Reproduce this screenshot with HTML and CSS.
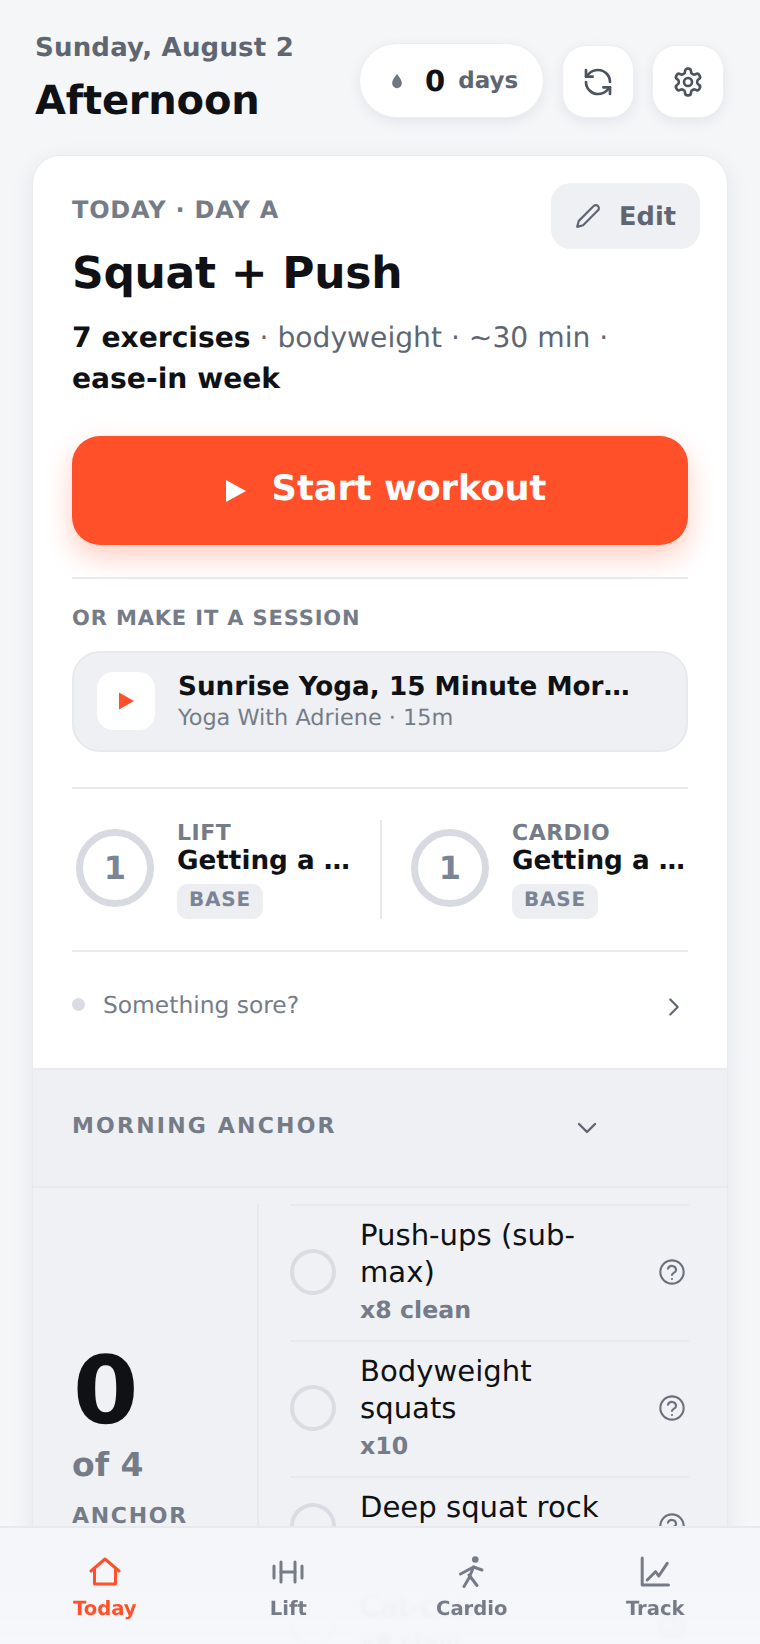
FILE: index.html
```html
<!DOCTYPE html>
<html lang="en">
<head>
<meta charset="utf-8">
<title>Today</title>
<link rel="stylesheet" href="styles.css">
</head>
<body>
<div class="app">
  <header class="top">
    <div class="top-text">
      <div class="date">Sunday, August 2</div>
      <h1 class="greeting">Afternoon</h1>
    </div>
    <div class="top-actions">
      <div class="streak">
        <svg class="drop" viewBox="0 0 24 24"><path d="M12 2.5c3.5 5 6.500 8 6.500 12.500a6.500 6.500 0 0 1-13 0C5.500 10.500 8.500 7.500 12 2.500z"/></svg>
        <span class="streak-num">0</span>
        <span class="streak-unit">days</span>
      </div>
      <button class="icon-btn">
        <svg class="ico ico-32" viewBox="0 0 24 24"><path d="M21 12a9 9 0 0 0-9-9 9.750 9.750 0 0 0-6.740 2.740L3 8"/><path d="M3 3v5h5"/><path d="M3 12a9 9 0 0 0 9 9 9.750 9.750 0 0 0 6.740-2.740L21 16"/><path d="M16 16h5v5"/></svg>
      </button>
      <button class="icon-btn">
        <svg class="ico ico-32" viewBox="0 0 24 24"><path d="M12.220 2h-.44a2 2 0 0 0-2 2v.18a2 2 0 0 1-1 1.730l-.43.25a2 2 0 0 1-2 0l-.15-.08a2 2 0 0 0-2.730.73l-.22.38a2 2 0 0 0 .73 2.730l.15.1a2 2 0 0 1 1 1.720v.51a2 2 0 0 1-1 1.740l-.15.09a2 2 0 0 0-.73 2.730l.22.38a2 2 0 0 0 2.730.73l.15-.08a2 2 0 0 1 2 0l.43.25a2 2 0 0 1 1 1.730V20a2 2 0 0 0 2 2h.44a2 2 0 0 0 2-2v-.18a2 2 0 0 1 1-1.730l.43-.25a2 2 0 0 1 2 0l.15.08a2 2 0 0 0 2.730-.73l.22-.39a2 2 0 0 0-.73-2.730l-.15-.08a2 2 0 0 1-1-1.740v-.5a2 2 0 0 1 1-1.740l.15-.09a2 2 0 0 0 .73-2.730l-.22-.38a2 2 0 0 0-2.730-.73l-.15.08a2 2 0 0 1-2 0l-.43-.25a2 2 0 0 1-1-1.730V4a2 2 0 0 0-2-2z"/><circle cx="12" cy="12" r="3"/></svg>
      </button>
    </div>
  </header>

  <main class="card">
    <section class="card-main">
      <button class="edit">
        <svg class="ico ico-26" viewBox="0 0 24 24"><path d="M17 3a2.850 2.830 0 1 1 4 4L7.500 20.500 2 22l1.500-5.500Z"/></svg>
        <span>Edit</span>
      </button>
      <div class="eyebrow">TODAY · DAY A</div>
      <h2 class="workout">Squat + Push</h2>
      <p class="meta"><b>7 exercises</b> · bodyweight · ~30 min · <b>ease-in week</b></p>
      <button class="start">
        <svg class="start-play" viewBox="0 0 20 22"><path d="M0 0l20 11L0 22z"/></svg>
        <span class="start-text">Start workout</span>
      </button>
      <div class="session-block">
        <div class="label">OR MAKE IT A SESSION</div>
        <div class="session">
          <div class="thumb"><svg class="thumb-play" viewBox="0 0 16 18"><path d="M0 0l16 9L0 18z"/></svg></div>
          <div class="session-text">
            <div class="session-title">Sunrise Yoga, 15 Minute Morning Stretch</div>
            <div class="session-sub">Yoga With Adriene · 15m</div>
          </div>
        </div>
      </div>
      <div class="programs">
        <div class="program">
          <div class="ring">1</div>
          <div class="program-text">
            <div class="program-kind">LIFT</div>
            <div class="program-name">Getting a base</div>
            <span class="tag">BASE</span>
          </div>
        </div>
        <div class="program">
          <div class="ring">1</div>
          <div class="program-text">
            <div class="program-kind">CARDIO</div>
            <div class="program-name">Getting a base</div>
            <span class="tag">BASE</span>
          </div>
        </div>
      </div>
      <div class="sore">
        <span class="dot"></span>
        <span class="sore-text">Something sore?</span>
        <svg class="ico ico-chev" viewBox="0 0 24 24"><path d="m9 18 6-6-6-6"/></svg>
      </div>
    </section>

    <section class="anchor-head">
      <span class="anchor-title">MORNING ANCHOR</span>
      <svg class="ico ico-chev-d" viewBox="0 0 24 24"><path d="m6 9 6 6 6-6"/></svg>
    </section>

    <section class="anchor-body">
      <div class="tally">
        <div class="tally-num">0</div>
        <div class="tally-of">of 4</div>
        <div class="tally-label">ANCHOR</div>
      </div>
      <div class="rows">
        <div class="row">
          <span class="check"></span>
          <div class="row-text"><div class="row-name">Push-ups (sub-max)</div><div class="row-sub">x8 clean</div></div>
          <svg class="ico ico-help" viewBox="0 0 24 24"><circle cx="12" cy="12" r="10"/><path d="M8.500 9.200a3.600 3.600 0 0 1 7 1c0 2.400-3.500 2.700-3.500 4.300"/><path d="M12 18h.01"/></svg>
        </div>
        <div class="row">
          <span class="check"></span>
          <div class="row-text"><div class="row-name">Bodyweight squats</div><div class="row-sub">x10</div></div>
          <svg class="ico ico-help" viewBox="0 0 24 24"><circle cx="12" cy="12" r="10"/><path d="M8.500 9.200a3.600 3.600 0 0 1 7 1c0 2.400-3.500 2.700-3.500 4.300"/><path d="M12 18h.01"/></svg>
        </div>
        <div class="row">
          <span class="check"></span>
          <div class="row-text"><div class="row-name">Deep squat rock</div><div class="row-sub">x5</div></div>
          <svg class="ico ico-help" viewBox="0 0 24 24"><circle cx="12" cy="12" r="10"/><path d="M8.500 9.200a3.600 3.600 0 0 1 7 1c0 2.400-3.500 2.700-3.500 4.300"/><path d="M12 18h.01"/></svg>
        </div>
        <div class="row">
          <span class="check"></span>
          <div class="row-text"><div class="row-name">Cat-cow</div><div class="row-sub">x8 slow</div></div>
          <svg class="ico ico-help" viewBox="0 0 24 24"><circle cx="12" cy="12" r="10"/><path d="M8.500 9.200a3.600 3.600 0 0 1 7 1c0 2.400-3.500 2.700-3.500 4.300"/><path d="M12 18h.01"/></svg>
        </div>
      </div>
    </section>
  </main>
</div>

<nav class="tabbar">
  <a class="tab tab-active">
    <svg class="ico ico-tab" viewBox="0 0 32 32"><path d="M2 15 16 3l14 12"/><path d="M5.500 13v15h21V13"/></svg>
    <span>Today</span>
  </a>
  <a class="tab">
    <svg class="ico ico-tab" viewBox="0 0 32 32"><path d="M2 10v12"/><path d="M9 6v20"/><path d="M23 6v20"/><path d="M30 10v12"/><path d="M9 16h14"/></svg>
    <span>Lift</span>
  </a>
  <a class="tab">
    <svg class="ico ico-tab" viewBox="0 0 32 32"><circle class="fill" cx="19.300" cy="3.500" r="3.300"/><path d="M4.500 18l13-7 8.500 3"/><path d="M17.500 11 13 22l-5 8.500"/><path d="M13 19l8 10.500"/></svg>
    <span>Cardio</span>
  </a>
  <a class="tab">
    <svg class="ico ico-tab" viewBox="0 0 32 32"><path d="M3.200 2v27h26.300"/><path d="M8.200 24l8.300-8.300 3.300 4.300 8.400-12.700"/></svg>
    <span>Track</span>
  </a>
</nav>
</body>
</html>
```
FILE: styles.css
```css
* { box-sizing: border-box; }
html, body { margin: 0; height: 100%; }
body {
  background: #f4f6f8;
  color: #0f1115;
  font-family: "DejaVu Sans", sans-serif;
  text-rendering: geometricPrecision;
  overflow: hidden;
}
button { font-family: inherit; border: 0; padding: 0; text-rendering: geometricPrecision; }
h1, h2, p { margin: 0; }

.app { padding: 30px 32px 0 32px; }

.top {
  display: flex;
  justify-content: space-between;
  align-items: flex-start;
  padding: 0 4px 0 4px;
  height: 125px;
}
.date { font-size: 26px; font-weight: 700; line-height: 34px; color: #5f6672; letter-spacing: .2px; margin: 1px 0 0 -1px; }
.greeting { font-size: 40px; font-weight: 700; line-height: 50px; margin: 11px 0 0 -1px; letter-spacing: -.2px; }

.top-actions { display: flex; align-items: flex-end; gap: 18px; margin-top: 13px; }
.streak {
  width: 185px; height: 75px;
  display: flex; align-items: center;
  padding-left: 28px;
  background: #fff;
  border-radius: 38px;
  border: 1px solid #eceef2;
  box-shadow: 0 4px 14px rgba(16,24,40,.07);
}
.drop { width: 18px; height: 18px; fill: #6f7782; margin-right: 19px; }
.streak-num { font-size: 29px; font-weight: 700; margin-right: 13px; }
.streak-unit { font-size: 23px; font-weight: 700; color: #5f6672; }
.icon-btn {
  width: 72px; height: 73px;
  display: flex; align-items: center; justify-content: center;
  background: #fff;
  border-radius: 24px;
  border: 1px solid #eceef2;
  box-shadow: 0 4px 14px rgba(16,24,40,.07);
}
.ico { fill: none; stroke: currentColor; stroke-width: 2; stroke-linecap: round; stroke-linejoin: round; display: block; }
.ico-32 { width: 32px; height: 32px; color: #4b5260; }
.ico-26 { width: 26px; height: 26px; color: #5f6672; }

.card {
  position: relative;
  height: 1700px;
  background: #fff;
  border: 1px solid #e8eaee;
  border-radius: 28px;
  box-shadow: 0 6px 24px rgba(16,24,40,.07);
  overflow: hidden;
}
.card-main { position: relative; padding: 37px 39px 0 39px; height: 912px; }
.edit {
  position: absolute; top: 27px; right: 27px;
  width: 149px; height: 66px;
  display: flex; align-items: center; justify-content: center; gap: 18px;
  background: #eef0f3;
  border-radius: 20px;
  color: #5f6672;
  font-size: 25.6px; font-weight: 700;
}
.edit span { margin-top: 1px; }
.eyebrow { font-size: 24px; font-weight: 700; letter-spacing: .8px; color: #757c88; line-height: 34px; }
.workout { font-size: 44px; font-weight: 700; line-height: 56px; margin-top: 19px; letter-spacing: -.3px; }
.meta { font-size: 28.16px; line-height: 41px; color: #5f6672; margin-top: 15px; }
.meta b { color: #0f1115; }

.start {
  width: 100%; height: 109px; margin-top: 37px;
  display: flex; align-items: center; justify-content: center; gap: 26px;
  padding-left: 12px;
  background: #ff5029;
  color: #fff;
  border-radius: 28px;
  font-size: 35.2px; font-weight: 700;
  box-shadow: 0 12px 28px rgba(255,80,41,.28);
}
.start-play { width: 20px; height: 22px; fill: #fff; }
.start-text { margin-top: -4px; }

.session-block { margin-top: 32px; border-top: 2px solid #e7e9ed; padding-top: 24px; }
.label { font-size: 21px; font-weight: 700; letter-spacing: .85px; color: #757c88; line-height: 30px; }
.session {
  margin-top: 18px; height: 101px;
  display: flex; align-items: center; gap: 23px;
  padding: 0 23px;
  background: #eef0f4;
  border: 2px solid #e7e9ed;
  border-radius: 28px;
}
.thumb {
  flex: none; width: 58px; height: 58px; margin-top: -2px;
  background: #fff; border-radius: 16px;
  display: flex; align-items: center; justify-content: center;
}
.thumb-play { width: 15px; height: 18px; fill: #ff5029; }
.session-text { min-width: 0; flex: 1; padding-right: 30px; margin-top: -4px; }
.session-title { font-size: 26.24px; font-weight: 700; line-height: 36px; white-space: nowrap; overflow: hidden; text-overflow: ellipsis; }
.session-sub { font-size: 22.4px; line-height: 25px; color: #757c88; margin-top: 1px; }

.programs {
  margin-top: 35px; padding: 31px 0;
  display: grid; grid-template-columns: 1fr 1fr;
  border-top: 2px solid #e7e9ed;
  border-bottom: 2px solid #e7e9ed;
}
.program { min-width: 0; display: flex; align-items: center; gap: 23px; padding: 0 26px 0 4px; }
.program + .program { border-left: 2px solid #e7e9ed; padding: 0 0 0 29px; }
.ring {
  flex: none; width: 78px; height: 78px; margin-top: -4px;
  display: flex; align-items: center; justify-content: center;
  border: 7px solid #d7dae1;
  border-radius: 50%;
  color: #7b8494; font-size: 32px; font-weight: 700;
}
.program-text { min-width: 0; flex: 1; padding-top: 2px; }
.program-kind { font-size: 22px; font-weight: 700; letter-spacing: .5px; color: #757c88; line-height: 24px; }
.program-name { font-size: 26.24px; font-weight: 700; line-height: 30px; white-space: nowrap; overflow: hidden; text-overflow: ellipsis; }
.tag {
  display: inline-block; margin-top: 8px; padding: 0 12px;
  height: 35px; line-height: 30px;
  background: #eceef1; border-radius: 10px;
  font-size: 20px; font-weight: 700; letter-spacing: .8px; color: #7b8494;
}

.sore { display: flex; align-items: center; height: 109px; padding-bottom: 4px; }
.dot { width: 13px; height: 13px; border-radius: 50%; background: #d9dce3; margin-right: 18px; }
.sore-text { flex: 1; font-size: 23.36px; color: #757c88; }
.ico-chev { width: 30px; height: 30px; stroke-width: 1.700; color: #5f6672; margin: 4px -1px 0 0; }

.anchor-head {
  height: 120px; padding: 0 39px 4px 39px;
  display: flex; align-items: center;
  background: #eef0f4;
  border-top: 2px solid #e7e9ed;
  border-bottom: 2px solid #e7e9ed;
}
.anchor-title { flex: 1; font-size: 22px; font-weight: 700; letter-spacing: 2.200px; color: #757c88; }
.ico-chev-d { width: 32px; height: 32px; stroke-width: 1.800; color: #5f6672; margin-right: 85px; margin-top: 4px; }

.anchor-body { display: flex; background: #eff1f5; min-height: 500px; }
.tally {
  flex: none; width: 226px; margin-top: 16px; padding: 0 0 158px 39px;
  border-right: 2px solid #e7e9ed;
  display: flex; flex-direction: column; justify-content: center;
  height: 620px;
}
.tally-num { font-size: 94px; font-weight: 700; line-height: 100px; margin-left: 1px; }
.tally-of { font-size: 33px; font-weight: 700; color: #757c88; line-height: 44px; margin-top: 1px; }
.tally-label { font-size: 22px; font-weight: 700; letter-spacing: 1.700px; color: #757c88; margin-top: 17px; }
.rows { flex: 1; padding: 16px 38px 0 31px; }
.row {
  display: flex; align-items: center; gap: 24px;
  padding: 11px 0 11px 0;
  border-top: 2px solid #e7e9ed;
}
.check { flex: none; width: 46px; height: 46px; margin-top: -2px; border-radius: 50%; border: 4px solid #d9dce3; }
.row-text { flex: 1; min-width: 0; padding-right: 2px; }
.row-name { font-size: 29.12px; line-height: 37px; }
.row-sub { font-size: 23.68px; font-weight: 700; color: #757c88; line-height: 38px; }
.ico-help { width: 28px; height: 28px; color: #6b727e; stroke-width: 1.800; margin: -2px 3px 0 0; }

.tabbar {
  position: fixed; left: 0; right: 0; bottom: 0;
  height: 118px;
  display: grid; grid-template-columns: repeat(4, 1fr);
  background: linear-gradient(to bottom, #f5f6f9 0, #f5f6f9 50%, rgba(245,246,249,.97) 72%, rgba(245,246,249,.96) 100%);
  backdrop-filter: blur(2px);
  border-top: 2px solid #e7e9ed;
  padding: 0 13px;
}
.tab {
  display: flex; flex-direction: column; align-items: center;
  padding-top: 28px;
  color: #757c88;
  font-size: 19.6px; font-weight: 700; line-height: 26px;
  gap: 8px;
}
.tab-active { color: #ff5029; }
.ico-tab { width: 32px; height: 32px; stroke-width: 3; }
.fill { fill: currentColor; stroke: none; }
```
